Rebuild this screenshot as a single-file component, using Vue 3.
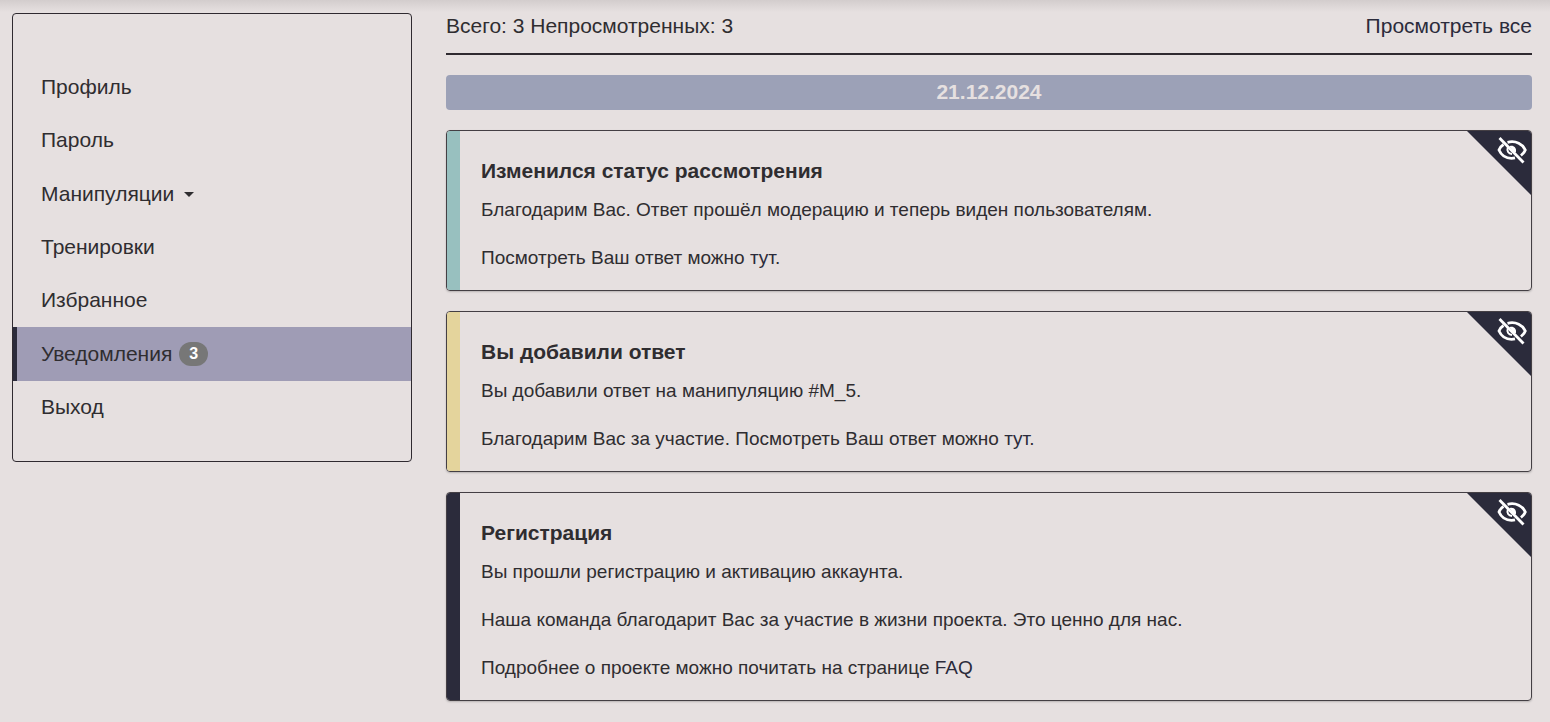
<script setup>
const menu = [
  { label: 'Профиль' },
  { label: 'Пароль' },
  { label: 'Манипуляции', dropdown: true },
  { label: 'Тренировки' },
  { label: 'Избранное' },
  { label: 'Уведомления', active: true, count: 3 },
  { label: 'Выход' },
]

const notices = [
  {
    tone: 'teal',
    title: 'Изменился статус рассмотрения',
    lines: [
      ['Благодарим Вас. Ответ прошёл модерацию и теперь виден пользователям.'],
      ['Посмотреть Ваш ответ можно ', 'тут', '.'],
    ],
  },
  {
    tone: 'sand',
    title: 'Вы добавили ответ',
    lines: [
      ['Вы добавили ответ на манипуляцию #M_5.'],
      ['Благодарим Вас за участие. Посмотреть Ваш ответ можно ', 'тут', '.'],
    ],
  },
  {
    tone: 'dark',
    title: 'Регистрация',
    lines: [
      ['Вы прошли регистрацию и активацию аккаунта.'],
      ['Наша команда благодарит Вас за участие в жизни проекта. Это ценно для нас.'],
      ['Подробнее о проекте можно почитать на странице ', 'FAQ'],
    ],
  },
]
</script>

<template>
  <div class="page">
    <nav class="sidebar">
      <ul class="menu">
        <li v-for="item in menu" :key="item.label" class="item" :class="{ active: item.active }">
          <button v-if="item.dropdown" type="button" class="entry">
            {{ item.label }}<span class="caret"></span>
          </button>
          <a v-else href="#" class="entry">
            {{ item.label }}<span v-if="item.count" class="badge">{{ item.count }}</span>
          </a>
        </li>
      </ul>
    </nav>

    <main class="content">
      <header class="summary">
        <span>Всего: 3 Непросмотренных: 3</span>
        <a href="#">Просмотреть все</a>
      </header>

      <h2 class="date">21.12.2024</h2>

      <article v-for="notice in notices" :key="notice.title" class="card" :class="notice.tone">
        <h3 class="title">{{ notice.title }}</h3>
        <p v-for="(line, i) in notice.lines" :key="i" class="line">
          {{ line[0] }}<a v-if="line[1]" href="#">{{ line[1] }}</a>{{ line[2] }}
        </p>
        <button type="button" class="corner" aria-label="Отметить просмотренным">
          <svg class="eye" viewBox="0 0 30 28" fill="none" stroke="#fff" stroke-width="2.8">
            <path d="M6.500 8.500C4.200 10 2.600 12 2 14c2.200 5 7 8.300 12.500 8.300 1.200 0 2.300-.1 3.500-.4" />
            <path d="M10.500 6.300C19 4 26 8.500 28.300 14c-.9 2.200-2.400 4-4.400 5.500" />
            <path d="M10.800 11.500c-1.300 3.500.8 6.300 4.200 6.500" stroke-width="2" />
            <path d="M12.500 10.300c3.500-1.500 7 1 6.500 5.200l-1.500 1.500z" fill="#fff" stroke="none" />
            <path d="M2.500 2 26.500 26.500" />
          </svg>
        </button>
      </article>
    </main>
  </div>
</template>

<style>
body {
  background: #e6e0e0;
}
</style>

<style scoped>
.page {
  display: grid;
  grid-template-columns: minmax(0, 400fr) minmax(0, 1086fr);
  gap: 34px;
  align-items: start;
  padding: 13px 18px 0 12px;
  background: linear-gradient(#d3cdcd, #e6e0e0 12px);
  color: #2f2d30;
  font-family: "Liberation Sans", Arial, sans-serif;
  font-size: 21px;
  line-height: 24px;
}

a {
  color: #2b2b3b;
  text-decoration: none;
}

.sidebar {
  border: 1px solid #2f2a30;
  border-radius: 4px;
  padding: 46px 0 27px;
}

.menu {
  display: grid;
  grid-auto-rows: 1fr;
  height: 374px;
  margin: 0;
  padding: 0;
  list-style: none;
}

.item {
  display: flex;
  border-left: 4px solid transparent;
}

.item.active {
  background: #9f9cb5;
  border-left-color: #2b2b3b;
}

.entry {
  display: flex;
  flex: 1;
  align-items: center;
  padding: 0 24px;
  border: 0;
  background: none;
  color: #2f2d30;
  font: inherit;
  cursor: pointer;
}

.caret {
  margin: 2px 0 0 10px;
  border: 5px solid transparent;
  border-top-color: currentColor;
  border-bottom: 0;
}

.badge {
  margin-left: 7px;
  padding: 0 10px;
  border-radius: 12px;
  background: #777;
  color: #fff;
  font-size: 16px;
  font-weight: bold;
}

.summary {
  display: flex;
  justify-content: space-between;
  padding: 1px 0 15px;
  border-bottom: 2px solid #2f2a30;
}

.date {
  margin: 20px 0;
  padding: 5px 0 6px;
  border-radius: 4px;
  background: #9ca1b7;
  color: #e6e0e0;
  font-size: 21px;
  text-align: center;
}

.card {
  position: relative;
  margin-bottom: 20px;
  padding: 28px 64px 20px 34px;
  border: 1px solid #443f44;
  border-radius: 4px;
  box-shadow: 0 1px 2px rgba(0, 0, 0, 0.2);
  overflow: hidden;
}

.card::before {
  content: "";
  position: absolute;
  inset: 0 auto 0 0;
  width: 13px;
}

.teal::before {
  background: #98c0bf;
}

.sand::before {
  background: #e4d49c;
}

.dark::before {
  background: #2b2b3b;
}

.title {
  margin: 0 0 15px;
  font-size: 21px;
}

.line {
  margin: 0 0 24px;
  font-size: 19px;
}

.line:last-of-type {
  margin-bottom: 0;
}

.corner {
  position: absolute;
  top: 0;
  right: 0;
  width: 64px;
  height: 64px;
  padding: 0;
  border: 0;
  background: #2b2b3b;
  clip-path: polygon(0 0, 100% 0, 100% 100%);
  cursor: pointer;
}

.eye {
  position: absolute;
  top: 5px;
  right: 4px;
  width: 30px;
  height: 28px;
}
</style>
